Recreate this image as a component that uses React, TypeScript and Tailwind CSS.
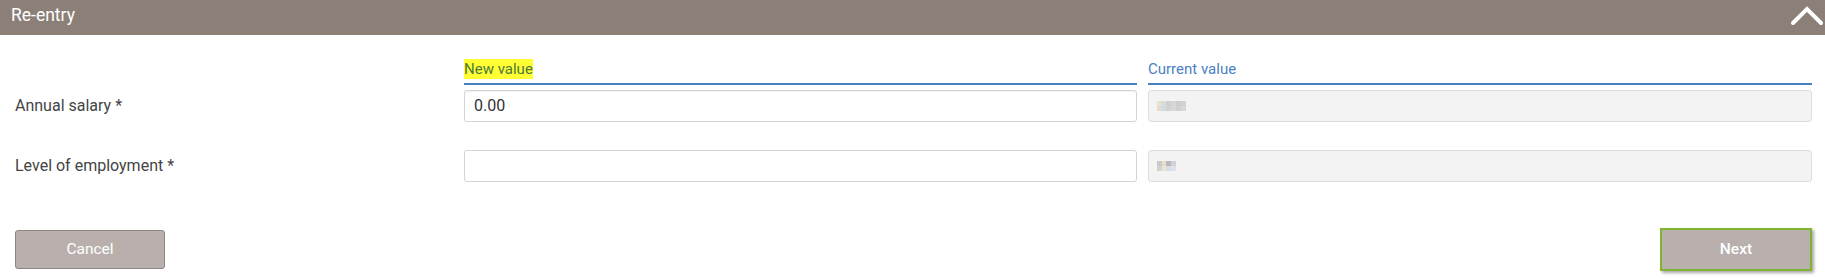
import React from "react";

export default function App() {
  return (
    <div className="w-[1825px] h-[279px] bg-white" style={{ fontFamily: "Roboto, 'Liberation Sans', sans-serif" }}>
      <div className="h-[35px] bg-[#8b7f78] flex items-center justify-between pl-[11px] pr-[1px]">
        <span className="text-white text-[17.5px] leading-[20px] -mt-[6px]">Re-entry</span>
        <svg width="34" height="22" viewBox="0 0 34 22" className="-mt-[5px]">
          <path d="M3 19 L17 5 L31 19" fill="none" stroke="#ffffff" strokeWidth="4" strokeLinecap="round" strokeLinejoin="miter" />
        </svg>
      </div>
      <div className="pl-[15px] pr-[13px] pt-[22px]">
        <div className="grid grid-cols-[438px_673px_664px] gap-x-[11px]">
          <div />
          <div className="border-b-2 border-[#4a7fc1] pb-[2px]">
            <span className="bg-[#ffff33] text-[#4c7a3a] text-[15px] leading-[20px] inline-block">New value</span>
          </div>
          <div className="border-b-2 border-[#4a7fc1] pb-[2px]">
            <span className="text-[#4a7fc1] text-[15px] leading-[20px] inline-block">Current value</span>
          </div>
        </div>
        <div className="grid grid-cols-[438px_673px_664px] gap-x-[11px] mt-[5px] items-center">
          <div className="text-[#444] text-[16px]">Annual salary *</div>
          <div className="h-[32px] border border-[#d4d4d4] rounded-[3px] flex items-center px-[9px] text-[16px] text-[#333] shadow-[inset_0_1px_1px_rgba(0,0,0,0.05)]">0.00</div>
          <div className="h-[32px] border border-[#dcdcdc] rounded-[3px] bg-[#f3f3f3] flex items-center px-[8px]">
            <div className="flex flex-col">
              <div className="flex">
                <span className="w-[4px] h-[5px] bg-[#eedfd0]" />
                <span className="w-[5px] h-[5px] bg-[#d8dde0]" />
                <span className="w-[5px] h-[5px] bg-[#cfcfcf]" />
                <span className="w-[5px] h-[5px] bg-[#d6d6d6]" />
                <span className="w-[5px] h-[5px] bg-[#cccccc]" />
                <span className="w-[5px] h-[5px] bg-[#d2d2d2]" />
              </div>
              <div className="flex">
                <span className="w-[4px] h-[5px] bg-[#e8dcc8]" />
                <span className="w-[5px] h-[5px] bg-[#cddde3]" />
                <span className="w-[5px] h-[5px] bg-[#d5d0d8]" />
                <span className="w-[5px] h-[5px] bg-[#d9d9d9]" />
                <span className="w-[5px] h-[5px] bg-[#d0d0d0]" />
                <span className="w-[5px] h-[5px] bg-[#d8d8d8]" />
              </div>
            </div>
          </div>
        </div>
        <div className="grid grid-cols-[438px_673px_664px] gap-x-[11px] mt-[28px] items-center">
          <div className="text-[#444] text-[16px]">Level of employment *</div>
          <div className="h-[32px] border border-[#d4d4d4] rounded-[3px]" />
          <div className="h-[32px] border border-[#dcdcdc] rounded-[3px] bg-[#f3f3f3] flex items-center px-[8px]">
            <div className="flex flex-col">
              <div className="flex">
                <span className="w-[5px] h-[5px] bg-[#c8c8c8]" />
                <span className="w-[4px] h-[5px] bg-[#e6dccc]" />
                <span className="w-[5px] h-[5px] bg-[#b8b8b8]" />
                <span className="w-[5px] h-[5px] bg-[#d4cede]" />
              </div>
              <div className="flex">
                <span className="w-[5px] h-[5px] bg-[#d2d2d2]" />
                <span className="w-[4px] h-[5px] bg-[#ede3d0]" />
                <span className="w-[5px] h-[5px] bg-[#cfe0e6]" />
                <span className="w-[5px] h-[5px] bg-[#e0e0e6]" />
              </div>
            </div>
          </div>
        </div>
        <div className="flex justify-between items-center mt-[46px]">
          <button className="w-[150px] h-[39px] bg-[#b9b0ad] border border-[#8e8480] rounded-[3px] text-white text-[15.5px]">Cancel</button>
          <button className="w-[152px] h-[43px] bg-[#b9b0ad] border-2 border-[#7eb42f] text-white text-[15.5px] font-medium shadow-[2px_2px_3px_rgba(0,0,0,0.35)]">Next</button>
        </div>
      </div>
    </div>
  );
}
